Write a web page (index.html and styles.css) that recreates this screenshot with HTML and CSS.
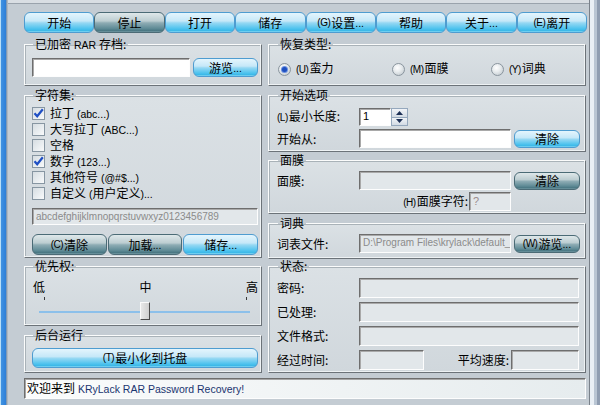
FILE: index.html
```html
<!DOCTYPE html>
<html>
<head>
<meta charset="utf-8">
<link rel="stylesheet" href="styles.css">
</head>
<body>
<div class="window">
  <div class="frame-left"></div>
  <div class="main">
    <div class="topstrip"></div>
    <div class="content">
      <div class="toolbar">
        <div class="btn light">开始</div>
        <div class="btn dark">停止</div>
        <div class="btn light">打开</div>
        <div class="btn light">储存</div>
        <div class="btn light"><span class="acc">(G)</span>设置<span class="lat">...</span></div>
        <div class="btn light">帮助</div>
        <div class="btn light">关于<span class="lat">...</span></div>
        <div class="btn light"><span class="acc">(E)</span>离开</div>
      </div>
      <div class="columns">
        <div class="col col-left">
          <fieldset class="group g-archive">
            <legend>已加密<span class="lat"> RAR </span>存档:</legend>
            <div class="archive-row">
              <div class="field white archive-field"></div>
              <div class="btn light browse-btn">游览<span class="lat">...</span></div>
            </div>
          </fieldset>
          <fieldset class="group g-charset">
            <legend>字符集:</legend>
            <div class="checks">
              <div class="check"><span class="box"><svg width="11" height="11" viewBox="0 0 11 11"><path d="M1.5 5.2 L4.2 8.3 L9.8 1.2" fill="none" stroke="#1f4fc4" stroke-width="2.2"/></svg></span><span>拉丁<span class="lat"> (abc...)</span></span></div>
              <div class="check"><span class="box"></span><span>大写拉丁<span class="lat"> (ABC...)</span></span></div>
              <div class="check"><span class="box"></span><span>空格</span></div>
              <div class="check"><span class="box"><svg width="11" height="11" viewBox="0 0 11 11"><path d="M1.5 5.2 L4.2 8.3 L9.8 1.2" fill="none" stroke="#1f4fc4" stroke-width="2.2"/></svg></span><span>数字<span class="lat"> (123...)</span></span></div>
              <div class="check"><span class="box"></span><span>其他符号<span class="lat"> (@#$...)</span></span></div>
              <div class="check"><span class="box"></span><span>自定义<span class="lat"> (</span>用户定义<span class="lat">)...</span></span></div>
            </div>
            <div class="field gray charset-field">abcdefghijklmnopqrstuvwxyz0123456789</div>
            <div class="charset-btns">
              <div class="btn dark"><span class="acc">(C)</span>清除</div>
              <div class="btn dark">加载<span class="lat">...</span></div>
              <div class="btn light">储存<span class="lat">...</span></div>
            </div>
          </fieldset>
          <fieldset class="group g-prio">
            <legend>优先权:</legend>
            <div class="prio-labels"><span>低</span><span>中</span><span>高</span></div>
            <div class="prio-ticks"><span class="tick"></span><span class="tick"></span></div>
            <div class="slider">
              <div class="track"></div>
              <div class="thumb"></div>
            </div>
          </fieldset>
          <fieldset class="group g-bg">
            <legend>后台运行</legend>
            <div class="btn light tray-btn"><span class="acc">(T)</span>最小化到托盘</div>
          </fieldset>
        </div>
        <div class="col col-right">
          <fieldset class="group g-type">
            <legend>恢复类型:</legend>
            <div class="radios">
              <div class="radio"><span class="dot on"></span><span><span class="acc">(U)</span>蛮力</span></div>
              <div class="radio"><span class="dot"></span><span><span class="acc">(M)</span>面膜</span></div>
              <div class="radio"><span class="dot"></span><span><span class="acc">(Y)</span>词典</span></div>
            </div>
          </fieldset>
          <fieldset class="group g-start">
            <legend>开始选项</legend>
            <div class="form-row">
              <span class="lbl"><span class="acc">(L)</span>最小长度:</span>
              <div class="spin">
                <div class="field white spin-field">1</div>
                <div class="spin-btns">
                  <div class="spin-btn"><svg width="7" height="4" viewBox="0 0 7 4"><path d="M0 4 L3.5 0 L7 4Z" fill="#1c2f55"/></svg></div>
                  <div class="spin-btn"><svg width="7" height="4" viewBox="0 0 7 4"><path d="M0 0 L3.5 4 L7 0Z" fill="#1c2f55"/></svg></div>
                </div>
              </div>
            </div>
            <div class="form-row row2">
              <span class="lbl">开始从:</span>
              <div class="field white wide"></div>
              <div class="btn light side-btn">清除</div>
            </div>
          </fieldset>
          <fieldset class="group g-mask">
            <legend>面膜</legend>
            <div class="form-row">
              <span class="lbl">面膜:</span>
              <div class="field gray wide"></div>
              <div class="btn dark side-btn">清除</div>
            </div>
            <div class="mask-row2">
              <span class="lbl-r"><span class="acc">(H)</span>面膜字符:</span>
              <div class="field gray mask-char">?</div>
            </div>
          </fieldset>
          <fieldset class="group g-dict">
            <legend>词典</legend>
            <div class="form-row">
              <span class="lbl">词表文件:</span>
              <div class="field gray wide path">D:\Program Files\krylack\default_</div>
              <div class="btn dark side-btn"><span class="acc">(W)</span>游览<span class="lat">...</span></div>
            </div>
          </fieldset>
          <fieldset class="group g-status">
            <legend>状态:</legend>
            <div class="status-rows">
              <div class="srow"><span class="lbl">密码:</span><div class="field gray sfield"></div></div>
              <div class="srow"><span class="lbl">已处理:</span><div class="field gray sfield"></div></div>
              <div class="srow"><span class="lbl">文件格式:</span><div class="field gray sfield"></div></div>
              <div class="srow"><span class="lbl">经过时间:</span><div class="field gray tfield"></div><span class="avg-lbl">平均速度:</span><div class="field gray afield"></div></div>
            </div>
          </fieldset>
        </div>
      </div>
      <div class="statusbar"><span>欢迎来到</span><span class="app"> KRyLack RAR Password Recovery!</span></div>
    </div>
  </div>
  <div class="frame-right"></div>
</div>
</body>
</html>
```

FILE: styles.css
```css
* { box-sizing: border-box; }
html, body { margin: 0; padding: 0; }
body {
  width: 600px;
  height: 405px;
  overflow: hidden;
  font-family: "Noto Sans CJK SC", "Liberation Sans", sans-serif;
  font-size: 12px;
  line-height: 14px;
  color: #000;
  background: #c4ccd3;
}
.lat { font-family: "Liberation Sans", sans-serif; font-size: 10.5px; }
.window { display: flex; height: 405px; }
.frame-left {
  width: 8px;
  background: linear-gradient(to right, #b6def8 0, #b6def8 1px, #4193e2 1px, #2d7fd8 6px, #7e9ab6 6px, #7e9ab6 7px, #aeb7c0 7px);
}
.frame-right {
  width: 11px;
  background: linear-gradient(to right, #79818a 0, #79818a 1px, #e9eff5 1px, #e9eff5 5px, #b9c5d3 5px, #b9c5d3 8px, #8f9db1 8px);
}
.main { flex: 1; display: flex; flex-direction: column; }
.topstrip { height: 4px; background: linear-gradient(#d9dee3 0, #d9dee3 3px, #9aa3ac 3px); }
.content { flex: 1; display: flex; flex-direction: column; padding: 8px 2px 0 16px; }

/* buttons */
.btn {
  display: flex;
  align-items: center;
  justify-content: center;
  border-radius: 6px;
  border: 1px solid #4e9cd0;
  white-space: nowrap;
  line-height: 14px;
}
.btn.light {
  background: linear-gradient(#e4f5fd 0%, #c6e8f8 42%, #96d8f3 52%, #4fc3ee 82%, #3cb9e8 92%, #86d9f4 100%);
}
.btn.dark {
  border-color: #4b6b76;
  background: linear-gradient(#dfe8ea 0%, #bccdd1 42%, #8eacb4 52%, #5e8a95 82%, #4a7884 92%, #7399a3 100%);
}
.acc { font-family: "Liberation Sans", sans-serif; font-size: 10px; letter-spacing: -0.5px; margin-right: 1px; }

.toolbar { display: flex; height: 21px; margin-bottom: 5px; }
.toolbar .btn { flex: 1; }

.columns { display: flex; gap: 6px; height: 335px; }
.col { display: flex; flex-direction: column; }
.col-left { width: 238px; }
.col-right { width: 318px; }

/* group boxes */
.group {
  margin: 0;
  min-width: 0;
  border: 1px solid;
  border-color: #fbfcfc #6c7379 #6c7379 #fbfcfc;
  box-shadow: inset -1px -1px 0 #eef2f4, inset 1px 1px 0 #a9b2b8;
  background: linear-gradient(#dbe1e5, #d0d7dc);
}
.col-left .group { padding: 0 3px 0 7px; }
.col-right .group { padding: 0 5px 0 8px; }
.group legend {
  margin-left: 1px;
  padding: 0 2px;
  height: 12px;
  line-height: 12px;
}

/* left */
.g-archive { height: 48px; }
.archive-row { display: flex; gap: 3px; margin-top: 8px; height: 19px; }
.archive-field { width: 158px; }
.browse-btn { width: 65px; }

.g-charset { height: 169px; margin-top: 3px; }
.checks { padding-top: 4px; }
.check { display: flex; align-items: center; height: 16px; }
.box {
  width: 13px; height: 13px;
  margin-right: 5px;
  border: 1px solid #8796a2;
  background: linear-gradient(135deg, #d6dde2, #f8fafb);
  display: flex; align-items: center; justify-content: center;
}
.charset-field {
  height: 17px; margin-top: 7px;
  color: #8b8b8b;
  font-family: "Liberation Sans", sans-serif;
  font-size: 10px;
  line-height: 15px;
  padding-left: 3px;
}
.charset-btns { display: flex; gap: 1px; margin-top: 9px; height: 21px; }
.charset-btns .btn { flex: 1; }

.g-prio { height: 66px; margin-top: 2px; }
.prio-labels { display: flex; justify-content: space-between; padding: 8px 0 0 1px; height: 22px; line-height: 14px; }
.prio-ticks { display: flex; justify-content: space-between; height: 4px; margin-top: 3px; padding: 0 11px 0 12px; }
.tick { width: 1px; height: 3px; background: #3a3a3a; }
.slider { position: relative; height: 18px; margin-top: 1px; }
.track { position: absolute; left: 7px; right: 8px; top: 9px; height: 2px; background: #8cc0ea; }
.thumb {
  position: absolute; left: 108px; top: 0; width: 10px; height: 18px;
  border: 1px solid; border-color: #fafafa #4c4c4c #4c4c4c #fafafa;
  background: linear-gradient(to right, #e8e8e8, #cfcfcf);
}

.g-bg { height: 44px; margin-top: 3px; }
.tray-btn { height: 20px; margin-top: 7px; }

/* right */
.g-type { height: 48px; }
.radios { display: grid; grid-template-columns: 114px 99px 1fr; padding-top: 11px; padding-left: 1px; }
.radio { display: flex; align-items: center; height: 16px; }
.dot {
  width: 13px; height: 13px; border-radius: 50%;
  margin-right: 5px;
  border: 1px solid #8a959e;
  background: radial-gradient(circle at 40% 35%, #ffffff 0, #e8ecee 40%, #b9c2c8 100%);
  display: flex; align-items: center; justify-content: center;
}
.dot.on::after {
  content: "";
  width: 5px; height: 5px; border-radius: 50%;
  background: #1d4fbf;
  box-shadow: 0 0 0 1px #6a8fe0;
}

.g-start { height: 63px; margin-top: 3px; }
.form-row { display: flex; align-items: center; height: 19px; margin-top: 7px; }
.g-start .form-row:first-of-type { height: 18px; }
.row2 { margin-top: 3px; }
.lbl { width: 82px; flex: none; }
.spin { display: flex; height: 18px; }
.spin-field { width: 32px; padding-left: 3px; font-family: "Liberation Sans", sans-serif; font-size: 11px; line-height: 15px; }
.spin-btns { display: flex; flex-direction: column; width: 17px; }
.spin-btn {
  flex: 1;
  border: 1px solid #95a8bd;
  background: linear-gradient(#f1f4f8, #d3dbe4);
  display: flex; align-items: center; justify-content: center;
}
.spin-btn + .spin-btn { border-top: none; }
.field {
  border: 1px solid;
  border-color: #6e6e6e #fdfdfd #fdfdfd #6e6e6e;
  box-shadow: inset 1px 1px 0 #a9a9a9;
  overflow: hidden;
  white-space: nowrap;
}
.field.white { background: #fff; }
.field.gray { background: #e2e7ea; }
.wide { width: 152px; height: 19px; }
.side-btn { width: 66px; height: 18px; margin-left: 3px; }

.g-mask { height: 60px; margin-top: 2px; }
.g-mask .form-row { margin-top: 5px; }
.mask-row2 { display: flex; justify-content: flex-end; align-items: center; margin-top: 2px; height: 19px; padding-right: 69px; }
.lbl-r { margin-right: 1px; }
.mask-char { width: 42px; height: 19px; color: #9a8c8c; font-family: "Liberation Sans", sans-serif; font-size: 11px; line-height: 16px; padding-left: 3px; }

.g-dict { height: 42px; margin-top: 3px; }
.g-dict .form-row { margin-top: 5px; }
.path { color: #8b8b8b; font-family: "Liberation Sans", sans-serif; font-size: 10px; line-height: 16px; padding-left: 3px; }

.g-status { height: 113px; margin-top: 1px; }
.status-rows { display: flex; flex-direction: column; gap: 4px; padding-top: 6px; }
.srow { display: flex; align-items: center; height: 20px; }
.sfield { width: 220px; height: 20px; }
.tfield { width: 65px; height: 20px; }
.avg-lbl { margin-left: auto; margin-right: 2px; }
.afield { width: 68px; height: 20px; margin-right: 1px; }

.statusbar {
  margin-top: 5px;
  margin-right: 1px;
  height: 21px;
  border: 1px solid;
  border-color: #6e6e6e #fdfdfd #fdfdfd #6e6e6e;
  box-shadow: inset 1px 1px 0 #a6a6a6;
  background: linear-gradient(to right, #fbfcfc, #e6ecee);
  padding-left: 2px;
  line-height: 18px;
  white-space: nowrap;
}
.statusbar .app { color: #1a3570; font-family: "Liberation Sans", sans-serif; font-size: 10.5px; }
```
